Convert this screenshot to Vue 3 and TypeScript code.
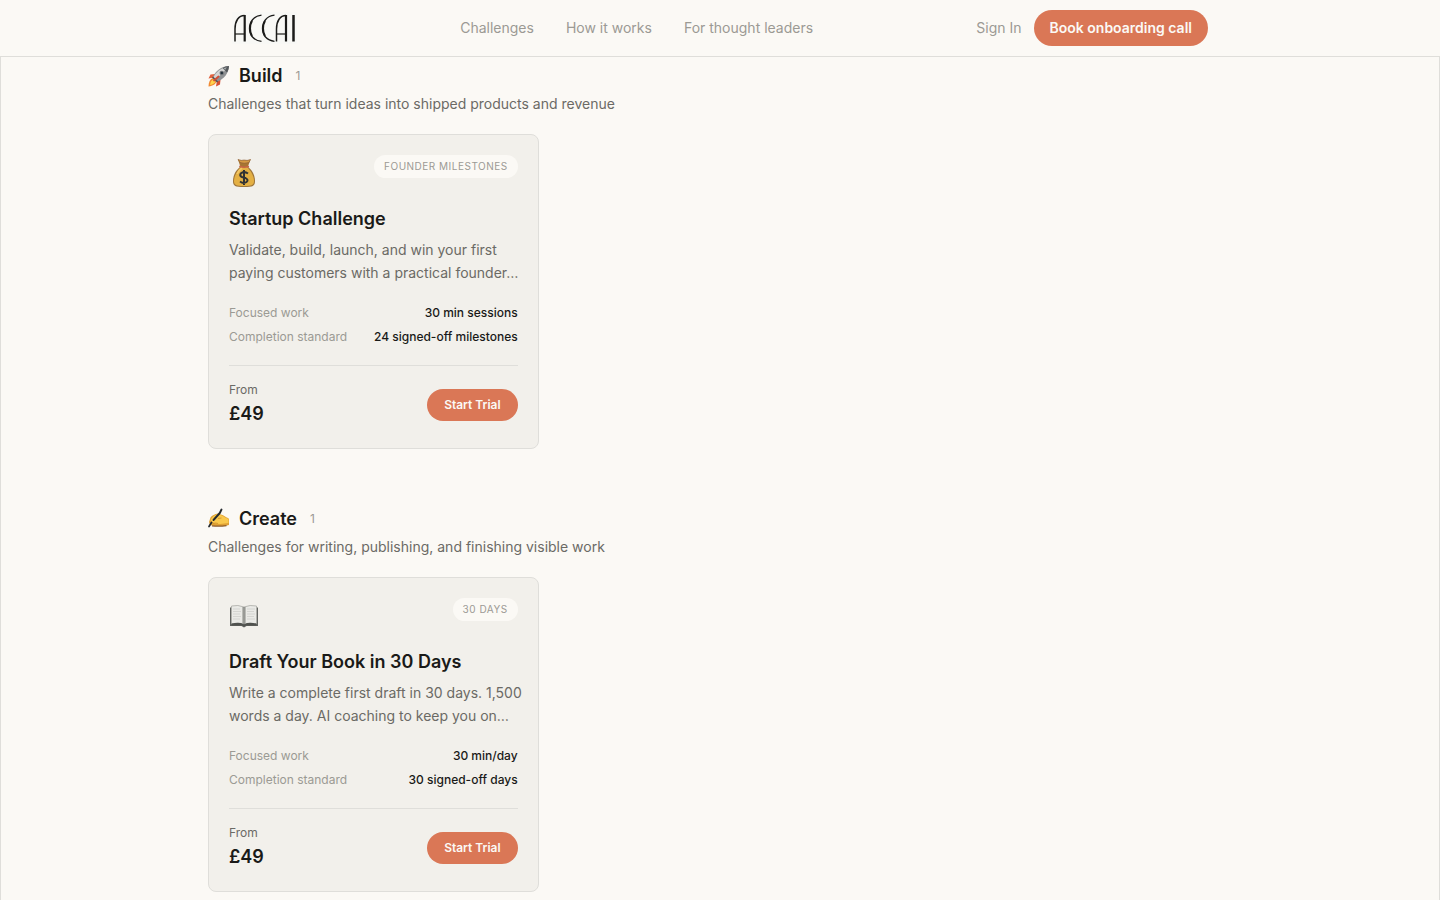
<script setup lang="ts">
interface Challenge {
  icon: 'bag' | 'book'
  tag: string
  title: string
  description: string
  work: string
  standard: string
  price: string
}

interface Category {
  icon: 'rocket' | 'writing'
  name: string
  description: string
  challenges: Challenge[]
}

const links: string[] = ['Challenges', 'How it works', 'For thought leaders']

const categories: Category[] = [
  {
    icon: 'rocket',
    name: 'Build',
    description: 'Challenges that turn ideas into shipped products and revenue',
    challenges: [
      {
        icon: 'bag',
        tag: 'Founder milestones',
        title: 'Startup Challenge',
        description: 'Validate, build, launch, and win your first\npaying customers with a practical founder…',
        work: '30 min sessions',
        standard: '24 signed-off milestones',
        price: '£49',
      },
    ],
  },
  {
    icon: 'writing',
    name: 'Create',
    description: 'Challenges for writing, publishing, and finishing visible work',
    challenges: [
      {
        icon: 'book',
        tag: '30 days',
        title: 'Draft Your Book in 30 Days',
        description: 'Write a complete first draft in 30 days. 1,500\nwords a day. AI coaching to keep you on…',
        work: '30 min/day',
        standard: '30 signed-off days',
        price: '£49',
      },
    ],
  },
]
</script>

<template>
  <div class="page">
    <header class="topbar">
      <div class="topbar-inner">
        <a class="logo" href="#" aria-label="ACCAI">
          <svg viewBox="0 0 65 32" width="65" height="32" aria-hidden="true">
            <rect width="65" height="32" fill="#f8f8f5" />
            <g fill="none" stroke="#1b1b19">
              <path d="M3 29.500V17C3 9 6.500 3.500 12.500 3.500" stroke-width="1.500" />
              <path d="M12.700 3V29.500" stroke-width="2.200" />
              <path d="M3 22H12.500" stroke-width="1.200" />
              <path d="M29.500 3.200C21.500 4 17.500 10 17.500 16.500S21.500 28.500 29.500 29.300" stroke-width="1.300" />
              <path d="M20 9C17.500 13 17.500 20 20 24" stroke-width="1.800" />
              <path d="M42.500 3.200C34.500 4 30.500 10 30.500 16.500S34.500 28.500 42.500 29.300" stroke-width="1.300" />
              <path d="M33 9C30.500 13 30.500 20 33 24" stroke-width="1.800" />
              <path d="M44.500 29.500V17C44.500 9 48 3.500 54 3.500" stroke-width="1.500" />
              <path d="M54 3V29.500" stroke-width="2.200" />
              <path d="M44.500 22H54" stroke-width="1.200" />
              <path d="M61.500 3V29.500" stroke-width="2.500" />
            </g>
          </svg>
        </a>
        <nav class="nav" aria-label="Main">
          <a v-for="link in links" :key="link" href="#">{{ link }}</a>
        </nav>
        <div class="actions">
          <a class="sign-in" href="#">Sign In</a>
          <button class="button button-large" type="button">Book onboarding call</button>
        </div>
      </div>
    </header>

    <main class="frame">
      <div class="content">
        <section v-for="category in categories" :key="category.name" class="category">
          <div class="category-head">
            <svg v-if="category.icon === 'rocket'" class="category-icon" viewBox="0 0 22 22" aria-hidden="true">
              <path d="M7 9L2.500 9.500L0.500 13.500L6 12.500Z" fill="#e2613d" />
              <path d="M12.500 14.500L12 19.500L8 21.500L9 15.500Z" fill="#d64e32" />
              <path d="M5 13C2 14 .5 17 .5 21.500C5 21 8 19 8.500 16Z" fill="#f18a32" />
              <path d="M5.500 14.500C3.500 15 2.500 17 2 20C5 19.500 7 18 7.500 16Z" fill="#ffd44b" />
              <path d="M5 12C7.500 6 13 1.500 21 1C20.500 8.500 16 14 9.500 16.500Z" fill="#8f9294" />
              <path d="M5.500 12C8.500 6.500 13 3 20 1.500C17 6 13 10 7.500 14Z" fill="#d4d5d4" />
              <path d="M21 1C20.800 3.500 20.200 5.500 19 7.500L14.500 3C16.500 1.800 18.500 1.200 21 1Z" fill="#55595c" />
              <path d="M15.500 3.200L18.800 2.200L17.300 4.800Z" fill="#a7abad" />
              <circle cx="13.800" cy="8" r="2.300" fill="#777b7e" />
              <circle cx="13.800" cy="8" r="1.300" fill="#25333c" />
              <path d="M4.500 12L9.500 17" stroke="#515456" stroke-width="1.600" />
              <path d="M6 15.500L10.500 11.500" stroke="#d34d34" stroke-width="1.800" stroke-linecap="round" />
            </svg>
            <svg v-else class="category-icon" viewBox="0 0 22 22" aria-hidden="true">
              <path d="M1 14L2.500 9.500C4 7.500 7 6 10 5.500L13 6.500C16 7.500 17.500 9 20 10L21 11V17L17 18H6L2 17Z" fill="#dfa033" />
              <path d="M2.500 12C3.500 9.500 6 7.500 9 6.300L12.500 7C15 8 17 9.500 20.500 11V15L12 16C8 16 4.500 15 2.500 12Z" fill="#f9c84c" />
              <path d="M5 15.500Q8 14.500 10 15.500M10 10.500L13.500 10" fill="none" stroke="#cf8f2c" stroke-width=".8" />
              <path d="M4 17.800Q11 18.500 18.500 17.600" fill="none" stroke="#8d5b29" stroke-width="1.200" />
              <path d="M13.500 1.500L11.800 5L5.500 12" fill="none" stroke="#252a2e" stroke-width="1.900" stroke-linecap="round" stroke-linejoin="round" />
              <path d="M3.500 14.500L1 18.500" stroke="#252a2e" stroke-width="1.700" stroke-linecap="round" />
            </svg>
            <h2>{{ category.name }}</h2>
            <span class="count">{{ category.challenges.length }}</span>
          </div>
          <p class="category-text">{{ category.description }}</p>

          <div class="grid">
            <article v-for="item in category.challenges" :key="item.title" class="card">
              <div class="card-head">
                <svg v-if="item.icon === 'bag'" class="card-icon" viewBox="0 0 30 36" aria-hidden="true">
                  <path d="M9 4.500Q13 6 15 5Q18 6 21.500 4.500L18.800 12H11.500Z" fill="#a87532" />
                  <path d="M9 4.500Q13 6 15 5Q18 6 21.500 4.500L20 7.500Q15 9 11 7.500Z" fill="#d69a43" stroke="#885b35" stroke-width=".6" />
                  <path d="M11.500 11.500C7 15 4 20 4 26C4 31 6 32 15 32S26 31 26 26C26 20 23 15 18.800 11.500Z" fill="#9f763a" />
                  <path d="M12 12C8 16 5 21 5 26C5 30 7 31 15 31S25 30 25 26C25 21 22 16 18 12Z" fill="#e4b044" />
                  <path d="M8 19Q10 15 13 13" fill="none" stroke="#f3c766" stroke-width="1.600" />
                  <path d="M11 11.500Q15 13 19.300 11.500" fill="none" stroke="#c86545" stroke-width="1.700" stroke-linecap="round" />
                  <path d="M19 18.500Q15.500 16 12.300 18Q9.800 20.500 13 22L16.500 23Q20 25 17.500 27Q14.500 29 11 26.500M15 15V30" fill="none" stroke="#323334" stroke-width="2" />
                </svg>
                <svg v-else class="card-icon" viewBox="0 0 30 36" aria-hidden="true">
                  <path d="M1 9.500H2.500V26H13L15 27.500L17 26H27.500V9.500H29V28H17.500L15 29.500L12.500 28H1Z" fill="#626461" />
                  <path d="M2.500 8Q9 6.500 15 9Q21 6.500 27.500 8V26Q20 24.500 15 26.500Q10 24.500 2.500 26Z" fill="#eaeae6" stroke="#aaa9a5" stroke-width=".8" />
                  <path d="M2.500 25.500Q10 24 15 26Q20 24 27.500 25.500V27.500H17L15 28.500L13 27.500H2.500Z" fill="#50524e" />
                  <path d="M14 9V26M16 9V26" stroke="#9a9b97" stroke-width="1.200" />
                  <path d="M15 9V27" stroke="#686a66" stroke-width=".8" />
                  <path d="M4 11H11M4 13.500H12M4 16H11M4 18.500H12M4 21H11M18 11H26M18 13.500H25M18 16H26M18 18.500H25M18 21H26" stroke="#cfcfcb" stroke-width=".8" />
                </svg>
                <span class="tag">{{ item.tag }}</span>
              </div>
              <h3>{{ item.title }}</h3>
              <p class="card-text">{{ item.description }}</p>
              <dl class="facts">
                <div>
                  <dt>Focused work</dt>
                  <dd>{{ item.work }}</dd>
                </div>
                <div>
                  <dt>Completion standard</dt>
                  <dd>{{ item.standard }}</dd>
                </div>
              </dl>
              <div class="card-foot">
                <div class="price">
                  <span>From</span>
                  <strong>{{ item.price }}</strong>
                </div>
                <button class="button" type="button">Start Trial</button>
              </div>
            </article>
          </div>
        </section>
      </div>
    </main>
  </div>
</template>

<style>
body {
  margin: 0;
  background: #fbf9f5;
}
</style>

<style scoped>
.page {
  display: flex;
  flex-direction: column;
  height: 100vh;
  overflow: hidden;
  background: #fbf9f5;
  color: #1a1a18;
  font-family: Inter, "Liberation Sans", sans-serif;
  font-size: 14px;
  line-height: 20px;
}

.page *,
.page {
  box-sizing: border-box;
}

h2,
h3,
p,
dl,
dd {
  margin: 0;
}

a {
  color: inherit;
  text-decoration: none;
}

.topbar {
  flex: none;
}

.topbar-inner {
  display: flex;
  align-items: center;
  justify-content: space-between;
  max-width: 1024px;
  height: 56px;
  margin: 0 auto;
  padding: 0 24px;
}

.logo,
.logo svg {
  display: block;
}

.nav {
  display: flex;
  gap: 32px;
  color: #9b9a94;
}

.actions {
  display: flex;
  align-items: center;
  gap: 12px;
  color: #9b9a94;
}

.button {
  height: 32px;
  padding: 0 17px;
  border: 0;
  border-radius: 16px;
  background: #da7756;
  color: #fbf9f5;
  font-family: inherit;
  font-size: 12px;
  font-weight: 600;
  line-height: 16px;
  cursor: pointer;
}

.button-large {
  height: 36px;
  padding: 0 16px;
  border-radius: 18px;
  font-size: 14px;
  line-height: 20px;
}

.frame {
  flex: 1;
  min-height: 0;
  overflow: hidden;
  border: 1px solid #dfdeda;
  border-bottom: 0;
}

.content {
  display: flex;
  flex-direction: column;
  gap: 56px;
  max-width: 1024px;
  margin: 0 auto;
  padding-top: 5px;
}

.category-head {
  display: flex;
  align-items: center;
}

.category-icon {
  width: 22px;
  height: 22px;
  margin-right: 9px;
}

h2,
h3 {
  font-size: 18px;
  font-weight: 600;
  line-height: 28px;
}

.count {
  margin-left: 13px;
  color: #9b9a94;
  font-size: 12px;
  line-height: 16px;
}

.category-text {
  margin-top: 4px;
  color: #6b6a65;
}

.grid {
  display: grid;
  grid-template-columns: repeat(3, minmax(0, 1fr));
  gap: 16px;
  margin-top: 20px;
}

.card {
  padding: 20px;
  border: 1px solid #dfdeda;
  border-radius: 8px;
  background: #f2f0eb;
}

.card-head {
  display: flex;
  align-items: flex-start;
  justify-content: space-between;
  margin-bottom: 14px;
}

.card-icon {
  width: 30px;
  height: 36px;
}

.tag {
  padding: 4px 10px;
  border-radius: 12px;
  background: #fbf9f5;
  color: #9b9a94;
  font-size: 10px;
  line-height: 15px;
  letter-spacing: 0.05em;
  text-transform: uppercase;
}

.card-text {
  margin: 5px 0 21px;
  color: #6b6a65;
  line-height: 23px;
  white-space: pre;
}

.facts {
  display: flex;
  flex-direction: column;
  gap: 8px;
  font-size: 12px;
  line-height: 16px;
}

.facts div {
  display: flex;
  justify-content: space-between;
}

.facts dt {
  color: #9b9a94;
}

.facts dd {
  font-weight: 500;
}

.card-foot {
  display: flex;
  align-items: center;
  justify-content: space-between;
  margin-top: 20px;
  padding-top: 16px;
  border-top: 1px solid #dfdeda;
}

.price {
  display: flex;
  flex-direction: column;
  gap: 2px;
}

.price span {
  color: #6b6a65;
  font-size: 12px;
  line-height: 16px;
}

.price strong {
  font-size: 18px;
  font-weight: 600;
  line-height: 28px;
}
</style>
